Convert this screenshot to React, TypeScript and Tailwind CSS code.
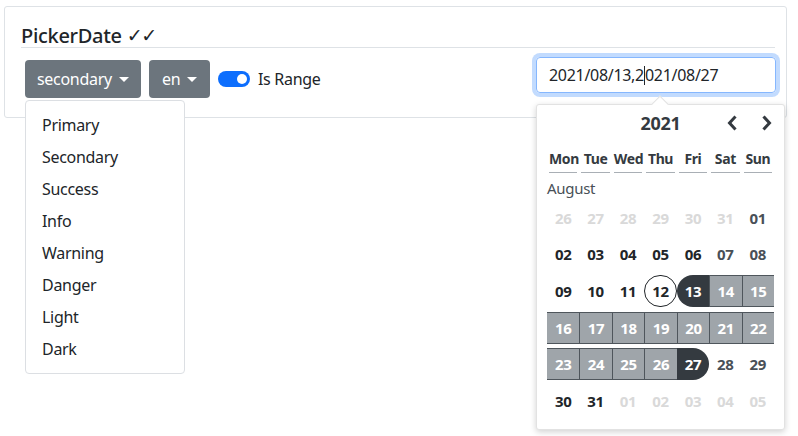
const variants = ['Primary', 'Secondary', 'Success', 'Info', 'Warning', 'Danger', 'Light', 'Dark'];
const weekDays = ['Mon', 'Tue', 'Wed', 'Thu', 'Fri', 'Sat', 'Sun'];

type Day = { label: string; outside?: boolean };

const days: Day[] = [
  ...['26', '27', '28', '29', '30', '31'].map((label) => ({ label, outside: true })),
  ...Array.from({ length: 31 }, (_, i) => ({ label: String(i + 1).padStart(2, '0') })),
  ...['01', '02', '03', '04', '05'].map((label) => ({ label, outside: true })),
];

const rangeStart = 13;
const rangeEnd = 27;

function Caret() {
  return (
    <span className="ml-[7px] inline-block h-0 w-0 border-x-[5px] border-t-[5px] border-x-transparent border-t-white align-[3px]" />
  );
}

function Chevron({ dir }: { dir: 'left' | 'right' }) {
  return (
    <svg width="12" height="16" viewBox="0 0 12 16" className="text-[#343a40]">
      <polyline
        points={dir === 'left' ? '8.5,2.5 3.5,8 8.5,13.5' : '3.5,2.5 8.5,8 3.5,13.5'}
        fill="none"
        stroke="currentColor"
        strokeWidth="3"
        strokeLinecap="square"
      />
    </svg>
  );
}

function DayCell({ day, col }: { day: Day; col: number }) {
  const n = parseInt(day.label, 10);
  const base = 'flex h-8 items-center justify-center text-[15px] font-bold';

  if (day.outside) {
    return <div className={`${base} text-[#d9d9d9]`}>{day.label}</div>;
  }
  if (n === rangeStart) {
    return <div className={`${base} rounded-l-full bg-[#343a40] text-white`}>{day.label}</div>;
  }
  if (n === rangeEnd) {
    return <div className={`${base} rounded-r-full bg-[#343a40] text-white`}>{day.label}</div>;
  }
  if (n > rangeStart && n < rangeEnd) {
    return (
      <div
        className={`${base} border-y border-[#4f565c] bg-[#9fa5aa] text-white ${col > 0 ? 'border-l' : ''}`}
      >
        {day.label}
      </div>
    );
  }
  if (n === 12) {
    return (
      <div className={`${base} rounded-full border border-[#212529] text-[#212529]`}>{day.label}</div>
    );
  }
  const weekend = col >= 5;
  return <div className={`${base} ${weekend ? 'text-[#495057]' : 'text-[#212529]'}`}>{day.label}</div>;
}

function Calendar() {
  return (
    <div className="absolute left-0 top-[47px] w-[249px] rounded-[3px] border border-[#e2e2e2] bg-white px-[10px] pb-3 pt-[6px] shadow-[0_2px_6px_rgba(0,0,0,0.18)]">
      <div className="absolute -top-[7px] left-[117px] h-3 w-3 rotate-45 border-l border-t border-[#e2e2e2] bg-white" />
      <div className="relative flex h-6 items-center justify-center">
        <span className="text-[18px] font-bold leading-6 text-[#343a40]">2021</span>
        <span className="absolute right-[36px] top-1">
          <Chevron dir="left" />
        </span>
        <span className="absolute right-[1px] top-1">
          <Chevron dir="right" />
        </span>
      </div>
      <div className="mt-[14px] grid grid-cols-7">
        {weekDays.map((d) => (
          <div
            key={d}
            className="mx-[2px] border-b border-[#a9afb5] pb-[3px] text-center text-[14px] font-bold leading-5 tracking-[-0.4px] text-[#343a40]"
          >
            {d}
          </div>
        ))}
      </div>
      <div className="mt-[5px] text-[15px] leading-5 text-[#495057]">August</div>
      <div className="mt-1 grid grid-cols-7 gap-y-[4.6px]">
        {days.map((d, i) => (
          <DayCell key={i} day={d} col={i % 7} />
        ))}
      </div>
    </div>
  );
}

export default function App() {
  return (
    <div className="min-h-[436px] bg-white pl-1 pr-[11px] pt-[6px] font-['Noto_Sans',sans-serif] tracking-[-0.3px] text-[#212529]">
      <div className="rounded-[3px] border border-[#dee2e6] pb-[19px] pl-4 pr-[11px] pt-[17px]">
        <h5 className="flex h-6 items-center border-b border-[#dee2e6] text-[20px] font-medium leading-[23px] text-[#212529]">
          PickerDate
          <span className="ml-[5px] font-['DejaVu_Sans',sans-serif] text-[19px] font-normal leading-none tracking-[-1.5px]">
            ✓✓
          </span>
        </h5>
        <div className="mt-3 flex items-start justify-between pl-1">
          <div className="flex items-center gap-2">
            <div className="relative">
              <button className="flex h-[38px] w-[116px] items-center rounded-[4px] bg-[#6c757d] pl-3 text-[16px] text-white">
                secondary
                <Caret />
              </button>
              <div className="absolute left-0 top-10 z-10 w-40 rounded-[4px] border border-[#dcdfe3] bg-white py-2">
                {variants.map((v) => (
                  <div key={v} className="px-4 py-1 text-[16px] leading-6 text-[#212529]">
                    {v}
                  </div>
                ))}
              </div>
            </div>
            <button className="flex h-[38px] w-[61px] items-center rounded-[4px] bg-[#6c757d] pl-[13px] text-[16px] text-white">
              en
              <Caret />
            </button>
            <div className="flex items-center">
              <span className="relative inline-block h-4 w-8 rounded-full bg-[#0d6efd]">
                <span className="absolute right-[3px] top-[3px] h-[10px] w-[10px] rounded-full bg-white" />
              </span>
              <span className="ml-2 text-[16px] leading-6 text-[#212529]">Is Range</span>
            </div>
          </div>
          <div className="relative -mr-px -mt-[3px]">
            <div className="flex h-9 w-[240px] items-center rounded-[4px] border border-[#86b7fe] pl-3 text-[16px] text-[#212529] shadow-[0_0_0_4px_rgba(13,110,253,0.25)]">
              2021/08/13,2<span className="inline-block h-[19px] w-px bg-[#212529]" />021/08/27
            </div>
            <Calendar />
          </div>
        </div>
      </div>
    </div>
  );
}
